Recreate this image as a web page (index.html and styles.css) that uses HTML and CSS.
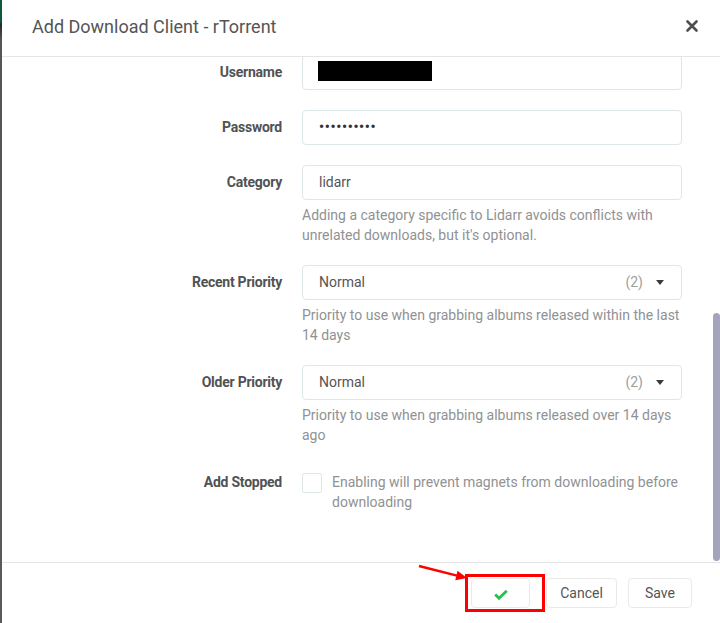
FILE: index.html
```html
<!DOCTYPE html>
<html lang="en">
<head>
  <meta charset="UTF-8" />
  <title>Add Download Client - rTorrent</title>
  <link rel="stylesheet" href="styles.css">
</head>
<body>
  <div class="page">
    <div class="backdrop-edge"></div>

    <div class="modal">
      <header class="modal-header">
        <h1 class="modal-title">Add Download Client - rTorrent</h1>
        <button class="close-btn" aria-label="Close">
          <svg width="12" height="12" viewBox="0 0 12 12">
            <path d="M1.5 1.5 L10.5 10.5 M10.5 1.5 L1.5 10.5" stroke="#4f4f4f" stroke-width="2.6" stroke-linecap="round" />
          </svg>
        </button>
      </header>

      <div class="modal-body">
        <div class="form">
          <div class="form-group">
            <label class="form-label">Username</label>
            <div class="form-input">
              <div class="text-input"><span class="redacted"></span></div>
            </div>
          </div>

          <div class="form-group">
            <label class="form-label">Password</label>
            <div class="form-input">
              <div class="text-input password">••••••••••</div>
            </div>
          </div>

          <div class="form-group">
            <label class="form-label">Category</label>
            <div class="form-input">
              <div class="text-input">lidarr</div>
              <div class="help-text">Adding a category specific to Lidarr avoids conflicts with unrelated downloads, but it's optional.</div>
            </div>
          </div>

          <div class="form-group">
            <label class="form-label">Recent Priority</label>
            <div class="form-input">
              <div class="text-input select">
                <span>Normal</span>
                <span class="select-hint">(2)</span>
                <span class="caret"></span>
              </div>
              <div class="help-text">Priority to use when grabbing albums released within the last 14 days</div>
            </div>
          </div>

          <div class="form-group">
            <label class="form-label">Older Priority</label>
            <div class="form-input">
              <div class="text-input select">
                <span>Normal</span>
                <span class="select-hint">(2)</span>
                <span class="caret"></span>
              </div>
              <div class="help-text">Priority to use when grabbing albums released over 14 days ago</div>
            </div>
          </div>

          <div class="form-group checkbox-group">
            <label class="form-label">Add Stopped</label>
            <div class="form-input checkbox-row">
              <span class="checkbox"></span>
              <div class="help-text">Enabling will prevent magnets from downloading before downloading</div>
            </div>
          </div>
        </div>

        <div class="scroll-thumb"></div>
      </div>

      <footer class="modal-footer">
        <div class="test-wrap">
          <button class="btn btn-test" aria-label="Test">
            <svg width="14" height="10" viewBox="0 0 14 10">
              <path d="M1.2 4.6 L5 8.3 L12.8 0.8" fill="none" stroke="#27c24c" stroke-width="2.8" />
            </svg>
          </button>
          <div class="highlight"></div>
        </div>
        <button class="btn btn-cancel">Cancel</button>
        <button class="btn">Save</button>
      </footer>
    </div>

    <!-- annotation arrow -->
    <svg class="arrow" width="70" height="28" viewBox="0 0 70 28">
      <line x1="9" y1="8" x2="47" y2="17.6" stroke="#f00" stroke-width="2.4" />
      <polygon points="57,20 45.3,22.2 47.5,12.8" fill="#f00" />
    </svg>
  </div>
</body>
</html>
```

FILE: styles.css
```css
* {
  box-sizing: border-box;
}
body {
  margin: 0;
  font-family: Roboto, 'Open Sans', 'Noto Sans', sans-serif;
  font-size: 14px;
  color: #515253;
  background: #4a4a4a;
}
.page {
  position: relative;
  display: flex;
  height: 623px;
  overflow: hidden;
}
.backdrop-edge {
  flex: 0 0 2px;
  background: linear-gradient(to bottom, #0d5a3b 0, #0d5a3b 22px, #1c2b2f 24px, #555 40px, #5a5a5a 100%);
}
.modal {
  flex: 1;
  display: flex;
  flex-direction: column;
  background: #fff;
  min-width: 0;
}

/* Cabecera */
.modal-header {
  flex: 0 0 57px;
  display: flex;
  align-items: center;
  justify-content: space-between;
  padding: 0 22px 4px 30px;
  border-bottom: 1px solid #e5e5e5;
}
.modal-title {
  margin: 0;
  font-size: 18px;
  font-weight: 400;
  color: #555;
}
.close-btn {
  border: none;
  background: none;
  padding: 0;
  width: 12px;
  height: 12px;
  display: flex;
  cursor: pointer;
}

/* Cuerpo */
.modal-body {
  position: relative;
  flex: 1;
  overflow: hidden;
  padding: 0 38px 0 30px;
}
.form {
  margin-top: -2px;
}
.form-group {
  display: flex;
  margin-bottom: 20px;
}
.form-label {
  flex: 0 0 250px;
  margin-right: 20px;
  text-align: right;
  font-weight: 700;
  letter-spacing: -0.25px;
  line-height: 35px;
  color: #515253;
}
.form-input {
  flex: 1;
  min-width: 0;
}
.text-input {
  height: 35px;
  border: 1px solid #dde6e9;
  border-radius: 4px;
  padding: 0 16px;
  line-height: 33px;
  color: #555;
  display: flex;
  align-items: center;
}
.redacted {
  display: block;
  width: 114px;
  height: 20px;
  margin-left: -1px;
  margin-top: -3px;
  background: #000;
}
.password {
  font-size: 14px;
  font-weight: 700;
  letter-spacing: 0.7px;
  color: #333;
}
.select-hint {
  margin-left: auto;
  color: #a0a0a0;
}
.caret {
  margin-left: 13px;
  margin-right: 1px;
  border-left: 4.5px solid transparent;
  border-right: 4.5px solid transparent;
  border-top: 5px solid #3a3a3a;
}
.help-text {
  margin-top: 5px;
  line-height: 20px;
  color: #909293;
}
.checkbox-group .form-label {
  line-height: 20px;
  padding-top: 7px;
}
.checkbox-row {
  display: flex;
  padding-top: 8px;
}
.checkbox {
  flex: 0 0 20px;
  height: 20px;
  border: 1px solid #dde6e9;
  border-radius: 2px;
  margin-right: 10px;
}
.checkbox-row .help-text {
  margin-top: -1px;
}
.scroll-thumb {
  position: absolute;
  right: 0;
  top: 256px;
  width: 7px;
  height: 248px;
  border-radius: 4px;
  background: #a2a5bb;
}

/* Pie */
.modal-footer {
  flex: 0 0 61px;
  display: flex;
  justify-content: flex-end;
  align-items: flex-start;
  padding: 15px 28px 0 30px;
  border-top: 1px solid #e5e5e5;
}
.btn {
  height: 30px;
  padding: 0 16px;
  border: 1px solid #eaeaea;
  border-radius: 4px;
  background: #fff;
  color: #555;
  font-family: inherit;
  font-size: 14px;
  cursor: pointer;
}
.test-wrap {
  position: relative;
  margin-right: 16px;
}
.btn-test {
  width: 59px;
  display: flex;
  align-items: center;
  justify-content: center;
  padding-top: 3px;
}
.btn-cancel {
  width: 71px;
  margin-right: 11px;
  padding: 0;
}
.highlight {
  position: absolute;
  left: -6px;
  right: -15px;
  top: -4px;
  bottom: -4px;
  border: 3px solid #f00;
  pointer-events: none;
}
.arrow {
  position: absolute;
  left: 410px;
  top: 558px;
}
```
